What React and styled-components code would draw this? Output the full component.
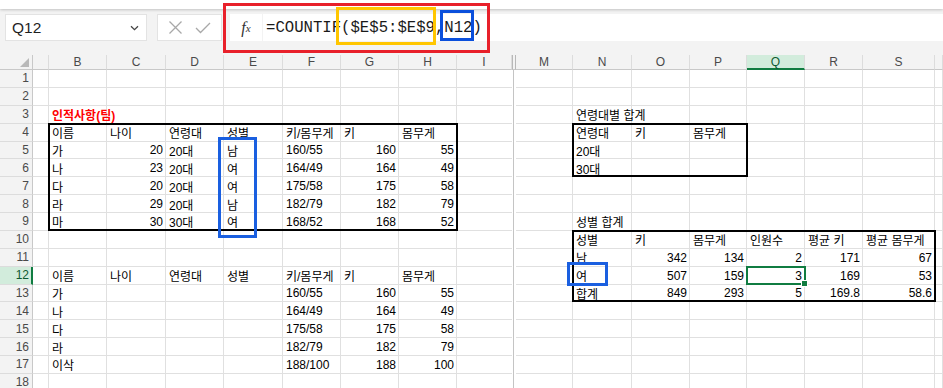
import React from "react";
import styled, { createGlobalStyle } from "styled-components";

const GlobalStyle = createGlobalStyle`
  html, body {
    margin: 0;
    padding: 0;
    background: #fff;
    overflow: hidden;
  }
  * { box-sizing: border-box; }
`;

const COLS = [
  { k: "A", w: 16, label: "" },
  { k: "B", w: 58 },
  { k: "C", w: 59 },
  { k: "D", w: 58 },
  { k: "E", w: 59 },
  { k: "F", w: 58 },
  { k: "G", w: 58 },
  { k: "H", w: 58 },
  { k: "I", w: 55 },
  { k: "|", w: 4, split: true },
  { k: "M", w: 57 },
  { k: "N", w: 59 },
  { k: "O", w: 58 },
  { k: "P", w: 57 },
  { k: "Q", w: 58 },
  { k: "R", w: 58 },
  { k: "S", w: 72 },
  { k: "T", w: 0, label: "" },
];

const colIndex = (k) => COLS.findIndex((c) => c.k === k) + 2;
const TEMPLATE = "33px " + COLS.map((c) => (c.w ? c.w + "px" : "1fr")).join(" ");
const ROW_COUNT = 18;
const ACTIVE = { col: "Q", row: 12 };

const DATA = {
  3: { B: { v: "인적사항(팀)", title: true }, N: "연령대별 합계" },
  4: { B: "이름", C: "나이", D: "연령대", E: "성별", F: "키/몸무게", G: "키", H: "몸무게", N: "연령대", O: "키", P: "몸무게" },
  5: { B: "가", C: 20, D: "20대", E: "남", F: "160/55", G: 160, H: 55, N: "20대" },
  6: { B: "나", C: 23, D: "20대", E: "여", F: "164/49", G: 164, H: 49, N: "30대" },
  7: { B: "다", C: 20, D: "20대", E: "여", F: "175/58", G: 175, H: 58 },
  8: { B: "라", C: 29, D: "20대", E: "남", F: "182/79", G: 182, H: 79 },
  9: { B: "마", C: 30, D: "30대", E: "여", F: "168/52", G: 168, H: 52, N: "성별 합계" },
  10: { N: "성별", O: "키", P: "몸무게", Q: "인원수", R: "평균 키", S: "평균 몸무게" },
  11: { N: "남", O: 342, P: 134, Q: 2, R: 171, S: 67 },
  12: { B: "이름", C: "나이", D: "연령대", E: "성별", F: "키/몸무게", G: "키", H: "몸무게", N: "여", O: 507, P: 159, Q: 3, R: 169, S: 53 },
  13: { B: "가", F: "160/55", G: 160, H: 55, N: "합계", O: 849, P: 293, Q: 5, R: 169.8, S: 58.6 },
  14: { B: "나", F: "164/49", G: 164, H: 49 },
  15: { B: "다", F: "175/58", G: 175, H: 58 },
  16: { B: "라", F: "182/79", G: 182, H: 79 },
  17: { B: "이삭", F: "188/100", G: 188, H: 100 },
};

const RANGES = [
  { from: ["B", 4], to: ["H", 9] },
  { from: ["N", 4], to: ["P", 6] },
  { from: ["N", 10], to: ["S", 13] },
];

const Page = styled.div`
  position: relative;
  width: 943px;
  height: 388px;
  overflow: hidden;
  font-family: "Liberation Sans", "Noto Sans CJK KR", sans-serif;
`;

/* ---------- formula bar ---------- */

const Toolbar = styled.div`
  height: 55px;
  background: #f3f3f3;
  display: flex;
  flex-direction: column;
`;

const TopStrip = styled.div`
  height: 9px;
  background: #fff;
  box-shadow: 0 1px 3px rgba(0, 0, 0, 0.2);
`;

const BarRow = styled.div`
  display: flex;
  padding: 5px 0 0 5px;
  height: 32px;
`;

const NameBox = styled.div`
  width: 142px;
  background: #fff;
  border: 1px solid #e3e3e3;
  display: flex;
  align-items: center;
  justify-content: space-between;
  padding: 0 7px 0 6px;
  font-size: 15.5px;
  color: #1f1f1f;
`;

const EditButtons = styled.div`
  margin-left: 10px;
  width: 65px;
  background: #fff;
  border: 1px solid #e3e3e3;
  display: flex;
  align-items: center;
  justify-content: space-around;
  padding: 0 4px;
`;

const FxBox = styled.div`
  margin-left: 8px;
  width: 32px;
  background: #fff;
  display: flex;
  align-items: center;
  justify-content: center;
  font-family: "Liberation Serif", serif;
  font-style: italic;
  font-size: 16px;
  color: #333;

  sub {
    font-size: 11px;
    vertical-align: -3px;
  }
`;

const FormulaInput = styled.div`
  margin-left: 1px;
  flex: 1;
  background: #fff;
  display: flex;
  align-items: center;
  padding-left: 3px;
  font-family: "Liberation Mono", monospace;
  font-size: 15.65px;
  color: #1a1a1a;
`;

/* ---------- sheet grid ---------- */

const Sheet = styled.div`
  display: grid;
  grid-template-columns: ${TEMPLATE};
  grid-template-rows: 15px repeat(${ROW_COUNT}, 17.88px);
  background: #fff;
  font-size: 12px;
`;

const ColHead = styled.div`
  grid-row: 1;
  grid-column: ${(p) => p.$c};
  background: ${(p) => (p.$active ? "#d2ecdc" : "#f3f3f3")};
  border-right: 1px solid #dcdcdc;
  border-bottom: ${(p) => (p.$active ? "2px solid #107c41" : "1px solid #c8c8c8")};
  color: ${(p) => (p.$active ? "#0e5a30" : "#4a4a4a")};
  display: flex;
  align-items: center;
  justify-content: center;
  font-size: 12px;
  line-height: 1;
`;

const SplitHead = styled(ColHead)`
  border-left: 1px solid #b8b8b8;
  border-right: 1px solid #b8b8b8;
  background: #f3f3f3;
`;

const Corner = styled.div`
  grid-row: 1;
  grid-column: 1;
  background: #f3f3f3;
  border-right: 1px solid #c8c8c8;
  border-bottom: 1px solid #c8c8c8;
  position: relative;

  &::after {
    content: "";
    position: absolute;
    right: 3px;
    bottom: 2px;
    border-style: solid;
    border-width: 0 0 9px 9px;
    border-color: transparent transparent #b9b9b9 transparent;
  }
`;

const RowHead = styled.div`
  grid-column: 1;
  grid-row: ${(p) => p.$r};
  background: ${(p) => (p.$active ? "#d2ecdc" : "#f3f3f3")};
  border-bottom: 1px solid #dcdcdc;
  border-right: ${(p) => (p.$active ? "2px solid #107c41" : "1px solid #c8c8c8")};
  color: ${(p) => (p.$active ? "#0e5a30" : "#4a4a4a")};
  display: flex;
  align-items: center;
  justify-content: flex-end;
  padding-right: ${(p) => (p.$active ? "2px" : "3px")};
  font-size: 12px;
`;

const Cell = styled.div`
  grid-row: ${(p) => p.$r};
  grid-column: ${(p) => p.$c};
  border-right: ${(p) => (p.$noRight ? "none" : "1px solid #e0e0e0")};
  border-bottom: 1px solid #e0e0e0;
  display: flex;
  align-items: center;
  justify-content: ${(p) => (p.$num ? "flex-end" : "flex-start")};
  padding: 1px 2px 0 3px;
  white-space: nowrap;
  overflow: visible;
  color: ${(p) => (p.$title ? "#ff0000" : "#000")};
  font-weight: ${(p) => (p.$title ? 700 : 400)};
  min-width: 0;
`;

const SplitCell = styled.div`
  grid-row: ${(p) => p.$r};
  grid-column: ${(p) => p.$c};
  background: linear-gradient(to right, transparent 1px, #c4c4c4 1px, #c4c4c4 2px, transparent 2px);
`;

const RangeBox = styled.div`
  grid-row: ${(p) => p.$r1} / ${(p) => p.$r2};
  grid-column: ${(p) => p.$c1} / ${(p) => p.$c2};
  border: 2px solid #000;
  margin: -1px -1px 0 -1px;
  pointer-events: none;
`;

const ActiveCell = styled.div`
  grid-row: ${(p) => p.$r};
  grid-column: ${(p) => p.$c};
  border: 2px solid #107c41;
  margin: -1px -1px 0 -1px;
  position: relative;
  pointer-events: none;

  &::after {
    content: "";
    position: absolute;
    right: -4px;
    bottom: -4px;
    width: 5px;
    height: 5px;
    background: #107c41;
    border: 1px solid #fff;
  }
`;

/* ---------- annotation marks drawn over the screenshot ---------- */

const Mark = styled.div`
  position: absolute;
  left: ${(p) => p.$x}px;
  top: ${(p) => p.$y}px;
  width: ${(p) => p.$w}px;
  height: ${(p) => p.$h}px;
  border: 3px solid ${(p) => p.$color};
  pointer-events: none;
`;

const Chevron = () => (
  <svg width="9" height="6" viewBox="0 0 9 6">
    <path d="M1 1.2 L4.5 4.6 L8 1.2" fill="none" stroke="#444" strokeWidth="1.3" />
  </svg>
);

const CancelIcon = () => (
  <svg width="15" height="15" viewBox="0 0 15 15">
    <path d="M1.5 1.5 L13.5 13.5 M13.5 1.5 L1.5 13.5" stroke="#a8a8a8" strokeWidth="1.3" fill="none" />
  </svg>
);

const EnterIcon = () => (
  <svg width="16" height="12" viewBox="0 0 16 12">
    <path d="M1 6 L5.5 10.5 L15 1" stroke="#a8a8a8" strokeWidth="1.3" fill="none" />
  </svg>
);

const renderCell = (col, r) => {
  const raw = DATA[r] && DATA[r][col.k];
  const item = raw && typeof raw === "object" ? raw : { v: raw };
  const c = colIndex(col.k);
  return (
    <Cell
      key={col.k + r}
      $r={r + 1}
      $c={c}
      $num={typeof item.v === "number"}
      $title={item.title}
      $noRight={col.k === "I"}
    >
      {item.v}
    </Cell>
  );
};

const App = () => {
  const rows = Array.from({ length: ROW_COUNT }, (_, i) => i + 1);
  return (
    <Page>
      <GlobalStyle />
      <Toolbar>
        <TopStrip />
        <BarRow>
          <NameBox>
            <span>Q12</span>
            <Chevron />
          </NameBox>
          <EditButtons>
            <CancelIcon />
            <EnterIcon />
          </EditButtons>
          <FxBox>
            f<sub>x</sub>
          </FxBox>
          <FormulaInput>=COUNTIF($E$5:$E$9,N12)</FormulaInput>
        </BarRow>
      </Toolbar>

      <Sheet>
        <Corner />
        {COLS.map((col) =>
          col.split ? (
            <SplitHead key={"h" + col.k} $c={colIndex(col.k)} />
          ) : (
            <ColHead key={"h" + col.k} $c={colIndex(col.k)} $active={col.k === ACTIVE.col}>
              {col.label !== undefined ? col.label : col.k}
            </ColHead>
          )
        )}
        {rows.map((r) => (
          <React.Fragment key={"r" + r}>
            <RowHead $r={r + 1} $active={r === ACTIVE.row}>
              {r}
            </RowHead>
            {COLS.map((col) =>
              col.split ? (
                <SplitCell key={col.k + r} $r={r + 1} $c={colIndex(col.k)} />
              ) : (
                renderCell(col, r)
              )
            )}
          </React.Fragment>
        ))}
        {RANGES.map((rg, i) => (
          <RangeBox
            key={"rg" + i}
            $r1={rg.from[1] + 1}
            $r2={rg.to[1] + 2}
            $c1={colIndex(rg.from[0])}
            $c2={colIndex(rg.to[0]) + 1}
          />
        ))}
        <ActiveCell $r={ACTIVE.row + 1} $c={colIndex(ACTIVE.col)} />
      </Sheet>

      <Mark $x={223} $y={3} $w={267} $h={50} $color="#e8202a" />
      <Mark $x={336} $y={7} $w={100} $h={38} $color="#ffc600" />
      <Mark $x={440} $y={10} $w={34} $h={31} $color="#0a4fdc" />
      <Mark $x={218} $y={137} $w={39} $h={101} $color="#1a5fe0" />
      <Mark $x={567} $y={262} $w={41} $h={24} $color="#1a5fe0" />
    </Page>
  );
};

export default App;
